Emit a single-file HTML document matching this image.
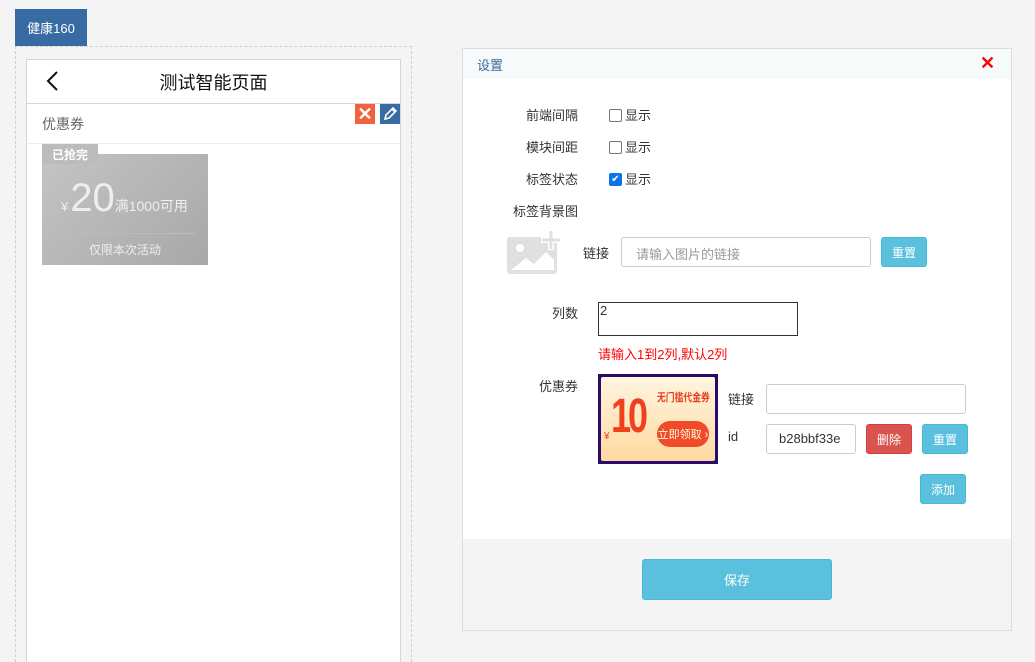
<!DOCTYPE html>
<html><head><meta charset="utf-8"><style>
*{margin:0;padding:0;box-sizing:border-box}
html,body{width:1035px;height:662px;overflow:hidden}
body{background:#f4f4f4;font-family:"Liberation Sans","Noto Sans CJK SC",sans-serif;font-size:13px;color:#333;position:relative}
.a{position:absolute}
.btn{position:absolute;color:#fff;font-size:12px;display:flex;align-items:center;justify-content:center;border-radius:3px}
.info{background:#5bc0de;border:1px solid #46b8da}
.inp{position:absolute;background:#fff;border:1px solid #ccc;border-radius:3px}
.lbl{position:absolute;width:120px;text-align:right;font-size:13px;color:#333}
.cb{position:absolute;width:13px;height:13px;border:1px solid #777;border-radius:2px;background:#fff}
</style></head><body>
<div class="a" style="left:15px;top:9px;width:72px;height:37px;background:#386ba3;color:#fff;font-size:13px;display:flex;align-items:center;justify-content:center">健康160</div>
<div class="a" style="left:15px;top:46px;width:397px;height:616px;border:1px dashed #d0d0d0;border-bottom:none"></div>
<div class="a" style="left:26px;top:59px;width:375px;height:603px;background:#fff;border:1px solid #d5d5d5;border-bottom:none"></div>
<svg class="a" style="left:44px;top:70px" width="16" height="22"><path d="M13 2 L4 11 L13 20" stroke="#111" stroke-width="2" fill="none"/></svg>
<div class="a" style="left:27px;top:69px;width:373px;text-align:center;font-size:18px;color:#111">测试智能页面</div>
<div class="a" style="left:27px;top:103px;width:373px;height:1px;background:#d5d5d5"></div>
<div class="a" style="left:42px;top:114px;font-size:14px;color:#666">优惠券</div>
<div class="a" style="left:27px;top:143px;width:373px;height:1px;background:#eee"></div>
<div class="a" style="left:355px;top:104px;width:20px;height:20px;background:#f0623e;color:#fff;font-size:18px;font-weight:bold;display:flex;align-items:center;justify-content:center">✕</div>
<div class="a" style="left:380px;top:104px;width:20px;height:20px;background:#386ba3"><svg width="20" height="20"><path d="M5 15 L6 11 L13 4 L16 7 L9 14 Z M12 5 L15 8" stroke="#fff" stroke-width="1.6" fill="none"/></svg></div>
<div class="a" style="left:42px;top:154px;width:166px;height:111px;background:linear-gradient(135deg,#c4c4c4,#a8a8a8)"></div>
<div class="a" style="left:42px;top:144px;width:56px;height:20px;background:#bcbcbc;border-radius:0 0 8px 0;color:#fff;font-size:12px;font-weight:bold;display:flex;align-items:center;justify-content:center">已抢完</div>
<div class="a" style="left:61px;top:176px;color:#eee;white-space:nowrap"><span style="font-size:13px">¥</span><span style="font-size:40px;margin-left:2px">20</span><span style="font-size:14px">满1000可用</span></div>
<div class="a" style="left:55px;top:233px;width:140px;height:1px;background:#bbb"></div>
<div class="a" style="left:42px;top:241px;width:166px;text-align:center;color:#eee;font-size:12px">仅限本次活动</div>

<div class="a" style="left:462px;top:48px;width:550px;height:583px;border:1px solid #ddd;background:#f4f4f4"></div>
<div class="a" style="left:463px;top:49px;width:548px;height:30px;background:#f7fafb"></div>
<div class="a" style="left:463px;top:79px;width:548px;height:460px;background:#fff"></div>
<div class="a" style="left:477px;top:55px;color:#386ba3;font-size:13px">设置</div>
<div class="a" style="left:980px;top:53px;color:#f00;font-size:18px;font-weight:bold">✕</div>

<div class="lbl" style="left:458px;top:105px">前端间隔</div>
<div class="lbl" style="left:458px;top:137px">模块间距</div>
<div class="lbl" style="left:458px;top:169px">标签状态</div>
<div class="lbl" style="left:458px;top:201px">标签背景图</div>
<div class="cb" style="left:609px;top:109px"></div><div class="a" style="left:625px;top:105px">显示</div>
<div class="cb" style="left:609px;top:141px"></div><div class="a" style="left:625px;top:137px">显示</div>
<div class="cb" style="left:609px;top:173px;background:#0a74e8;border-color:#0a74e8;color:#fff;font-size:10px;line-height:11px;text-align:center">✔</div><div class="a" style="left:625px;top:169px">显示</div>
<svg class="a" style="left:506px;top:230px" width="60" height="45"><rect x="1" y="7" width="50" height="37" rx="3" fill="#e0e0e0"/><circle cx="14" cy="18" r="4" fill="#fff"/><path d="M5 40 L20 28 L28 34 L40 22 L48 30 L48 40 Z" fill="#fff"/><rect x="42" y="0" width="6" height="20" fill="#fff"/><rect x="35" y="7" width="20" height="6" fill="#fff"/><rect x="43.5" y="1" width="3" height="18" fill="#e0e0e0"/><rect x="36" y="8.5" width="18" height="3" fill="#e0e0e0"/></svg>
<div class="a" style="left:583px;top:243px">链接</div>
<div class="inp" style="left:621px;top:237px;width:250px;height:30px;padding:6px 14px;color:#999">请输入图片的链接</div>
<div class="btn info" style="left:881px;top:237px;width:46px;height:30px">重置</div>

<div class="lbl" style="left:458px;top:303px">列数</div>
<div class="a" style="left:598px;top:302px;width:200px;height:34px;border:1px solid #333;background:#fff;padding-left:1px;font-size:13px;line-height:16px">2</div>
<div class="a" style="left:598px;top:344px;color:#f00">请输入1到2列,默认2列</div>
<div class="lbl" style="left:458px;top:376px">优惠券</div>
<div class="a" style="left:598px;top:374px;width:120px;height:90px;background:#2a0a6a;padding:3px">
<div style="width:114px;height:84px;background:linear-gradient(#fff5e0,#ffd9a0);position:relative;border-radius:2px">
<div class="a" style="left:3px;top:54px;color:#f0401e;font-size:10px">¥</div>
<div class="a" style="left:10px;top:10px;color:#f0401e;font-size:48px;font-weight:bold;letter-spacing:-4px;line-height:60px;transform:scaleX(0.75);transform-origin:left">10</div>
<div class="a" style="left:56px;top:12px;color:#e8401e;font-size:11px;font-weight:bold;white-space:nowrap;transform:scaleX(0.8);transform-origin:left">无门槛代金券</div>
<div class="a" style="left:56px;top:44px;width:52px;height:26px;border-radius:13px;background:#f04a28;color:#ffd;font-size:11px;display:flex;align-items:center;justify-content:center;white-space:nowrap">立即领取 ›</div>
</div></div>
<div class="a" style="left:728px;top:389px">链接</div>
<div class="inp" style="left:766px;top:384px;width:200px;height:30px"></div>
<div class="a" style="left:728px;top:429px">id</div>
<div class="inp" style="left:766px;top:424px;width:90px;height:30px;padding:6px 12px;overflow:hidden;white-space:nowrap;font-size:13px">b28bbf33e</div>
<div class="btn" style="left:866px;top:424px;width:46px;height:30px;background:#d9534f;border:1px solid #d43f3a">删除</div>
<div class="btn info" style="left:922px;top:424px;width:46px;height:30px">重置</div>
<div class="btn info" style="left:920px;top:474px;width:46px;height:30px">添加</div>
<div class="btn info" style="left:642px;top:559px;width:190px;height:41px;font-size:13px">保存</div>
</body></html>
